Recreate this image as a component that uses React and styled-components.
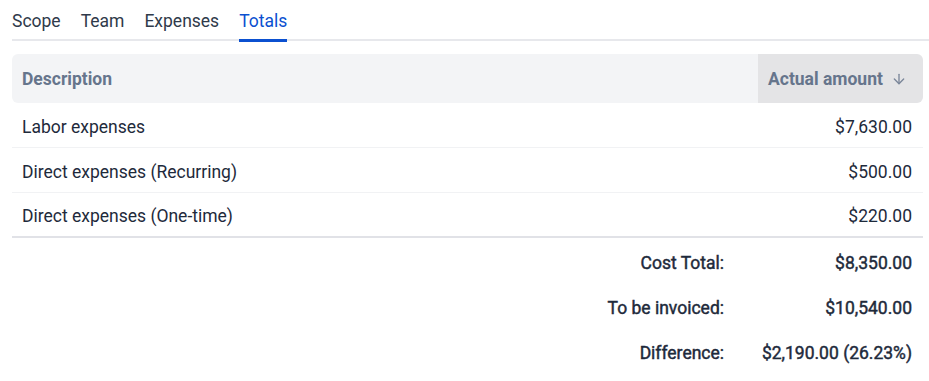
import React from "react";
import styled, { createGlobalStyle } from "styled-components";
import { ArrowDown } from "lucide-react";

const Global = createGlobalStyle`
  html, body { margin: 0; padding: 0; background: #fff; }
  body { font-family: Roboto, "Liberation Sans", Arial, sans-serif; }
  * { box-sizing: border-box; }
`;

const Page = styled.div`
  padding-left: 12px;
  width: 929px;
`;

const TabBar = styled.div`
  display: flex;
  gap: 20px;
  padding-top: 9px;
  border-bottom: 2px solid #e7e8ec;
`;

const Tab = styled.div`
  font-size: 17.5px;
  line-height: 24px;
  padding-bottom: 6px;
  margin-bottom: -3px;
  border-bottom: 3px solid ${(p) => (p.$active ? "#0b50d0" : "transparent")};
  color: ${(p) => (p.$active ? "#0b50d0" : "#2f3a4a")};
  cursor: pointer;
`;

const Table = styled.div`
  margin-top: 13px;
  margin-right: 6px;
  display: grid;
  grid-template-columns: 1fr 165px;
`;

const HeadCell = styled.div`
  height: 49px;
  display: flex;
  align-items: center;
  gap: 8px;
  padding: 1px 0 0 10px;
  font-size: 17.5px;
  font-weight: 700;
  color: #66758c;
  background: ${(p) => (p.$sorted ? "#e4e4e6" : "#f3f4f6")};
  border-radius: ${(p) => (p.$sorted ? "0 6px 6px 0" : "6px 0 0 6px")};
`;

const Cell = styled.div`
  height: 45px;
  display: flex;
  align-items: center;
  justify-content: ${(p) => (p.$right ? "flex-end" : "flex-start")};
  padding: ${(p) => (p.$right ? "3px 11px 0 0" : "3px 0 0 10px")};
  font-size: 17.5px;
  color: #1e2a3b;
  border-bottom: ${(p) => (p.$last ? "2px solid #e1e2e7" : "1px solid #f1f2f4")};
`;

const TotalLabel = styled.div`
  height: 45px;
  display: flex;
  align-items: center;
  justify-content: flex-end;
  padding: 5px 34px 0 0;
  font-size: 17.5px;
  font-weight: 400;
  -webkit-text-stroke: 0.45px #1e2a3b;
  color: #1e2a3b;
`;

const TotalValue = styled(TotalLabel)`
  padding-right: 11px;
`;

const rows = [
  ["Labor expenses", "$7,630.00"],
  ["Direct expenses (Recurring)", "$500.00"],
  ["Direct expenses (One-time)", "$220.00"],
];

const totals = [
  ["Cost Total:", "$8,350.00"],
  ["To be invoiced:", "$10,540.00"],
  ["Difference:", "$2,190.00 (26.23%)"],
];

export default function App() {
  return (
    <>
      <Global />
      <Page>
        <TabBar>
          <Tab>Scope</Tab>
          <Tab>Team</Tab>
          <Tab>Expenses</Tab>
          <Tab $active>Totals</Tab>
        </TabBar>
        <Table>
          <HeadCell>Description</HeadCell>
          <HeadCell $sorted>
            Actual amount
            <ArrowDown size={16} strokeWidth={2} color="#7a8699" />
          </HeadCell>
          {rows.map(([d, v], i) => (
            <React.Fragment key={d}>
              <Cell $last={i === rows.length - 1}>{d}</Cell>
              <Cell $right $last={i === rows.length - 1}>{v}</Cell>
            </React.Fragment>
          ))}
          {totals.map(([l, v]) => (
            <React.Fragment key={l}>
              <TotalLabel>{l}</TotalLabel>
              <TotalValue>{v}</TotalValue>
            </React.Fragment>
          ))}
        </Table>
      </Page>
    </>
  );
}
